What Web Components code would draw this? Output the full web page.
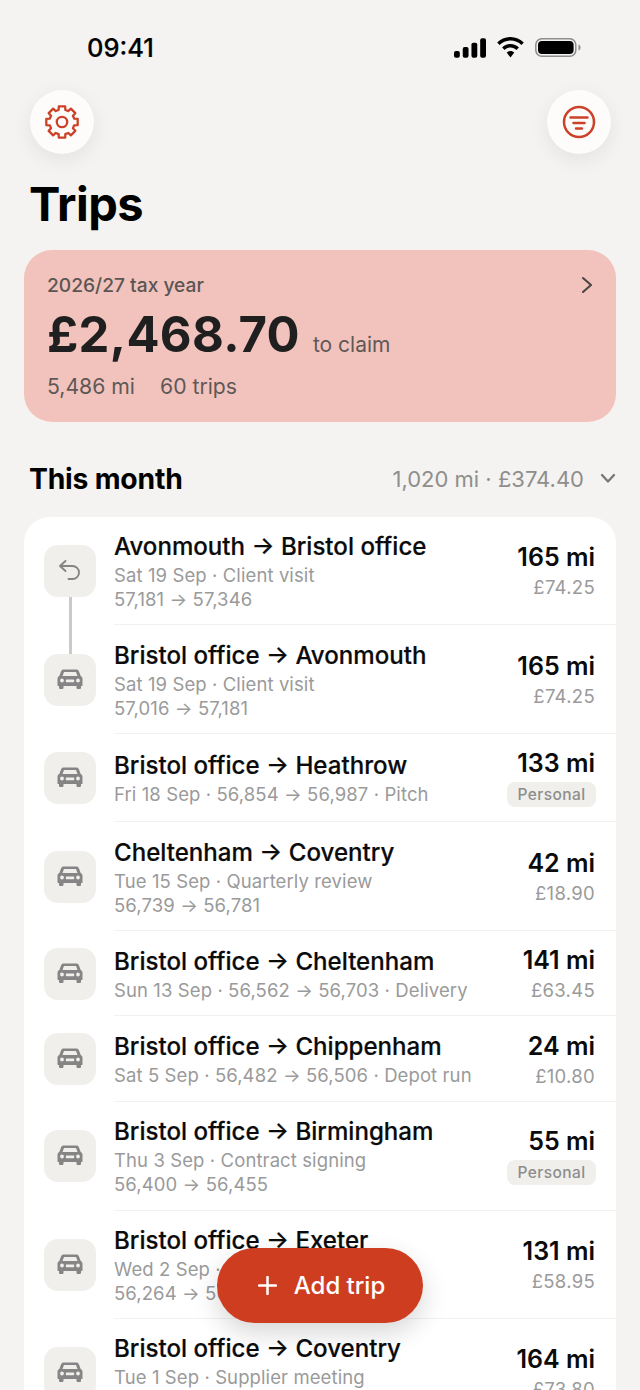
<!DOCTYPE html>
<html lang="en">
<head>
<meta charset="utf-8">
<title>Trips</title>
<style>
    html, body { margin: 0; padding: 0; background: #f4f3f1; }
    body { width: 640px; height: 1390px; overflow: hidden; position: relative; font-family: Inter, "Liberation Sans", sans-serif; }
    main { display: block; }
</style>
</head>
<body>
<main>
    <status-bar></status-bar>
    <top-actions></top-actions>
    <page-title>Trips</page-title>
    <summary-card year="2026/27 tax year" amount="£2,468.70" miles="5,486 mi" trips="60 trips"></summary-card>
    <section-head label="This month" total="1,020 mi · £374.40"></section-head>
    <trip-list>
        <trip-row icon="back" linked route="Avonmouth → Bristol office" line1="Sat 19 Sep · Client visit" line2="57,181 → 57,346" miles="165 mi" amount="£74.25"></trip-row>
        <trip-row route="Bristol office → Avonmouth" line1="Sat 19 Sep · Client visit" line2="57,016 → 57,181" miles="165 mi" amount="£74.25"></trip-row>
        <trip-row route="Bristol office → Heathrow" line1="Fri 18 Sep · 56,854 → 56,987 · Pitch" miles="133 mi" personal></trip-row>
        <trip-row route="Cheltenham → Coventry" line1="Tue 15 Sep · Quarterly review" line2="56,739 → 56,781" miles="42 mi" amount="£18.90"></trip-row>
        <trip-row route="Bristol office → Cheltenham" line1="Sun 13 Sep · 56,562 → 56,703 · Delivery" miles="141 mi" amount="£63.45"></trip-row>
        <trip-row route="Bristol office → Chippenham" line1="Sat 5 Sep · 56,482 → 56,506 · Depot run" miles="24 mi" amount="£10.80"></trip-row>
        <trip-row route="Bristol office → Birmingham" line1="Thu 3 Sep · Contract signing" line2="56,400 → 56,455" miles="55 mi" personal></trip-row>
        <trip-row route="Bristol office → Exeter" line1="Wed 2 Sep · Site survey" line2="56,264 → 56,395" miles="131 mi" amount="£58.95"></trip-row>
        <trip-row route="Bristol office → Coventry" line1="Tue 1 Sep · Supplier meeting" line2="56,100 → 56,264" miles="164 mi" amount="£73.80"></trip-row>
    </trip-list>
</main>
<add-button>Add trip</add-button>

<script>
const CAR = `<path fill="currentColor" fill-rule="evenodd" d="M6.6 2.5h12.8c1.1 0 2 .6 2.4 1.6l1.9 4.9c1.1.5 1.8 1.5 1.8 2.8v6.4c0 .5-.4.9-.9.9H24v1.6c0 .7-.6 1.3-1.3 1.3h-1.9c-.7 0-1.3-.6-1.3-1.3v-1.6H6.5v1.6c0 .7-.6 1.3-1.3 1.3H3.3c-.7 0-1.3-.6-1.3-1.3v-1.6h-.6c-.5 0-.9-.4-.9-.9v-6.4c0-1.3.7-2.3 1.8-2.8l1.9-4.9c.4-1 1.3-1.6 2.4-1.6ZM7 5l-1.5 3.9h15L19 5H7Zm-2 6.6a1.9 1.9 0 1 0 0 3.8 1.9 1.9 0 0 0 0-3.8Zm16 0a1.9 1.9 0 1 0 0 3.8 1.9 1.9 0 0 0 0-3.8Zm-11.5.9c-.4 0-.7.3-.7.7v1.3c0 .4.3.7.7.7h7c.4 0 .7-.3.7-.7v-1.3c0-.4-.3-.7-.7-.7h-7Z"/>`;
const BACK = `<path fill="none" stroke="currentColor" stroke-width="1.900" stroke-linecap="round" stroke-linejoin="round" d="M8.500 13 3 8l5.500-5M3.200 8h12.300a6.500 6.500 0 0 1 0 13h-4"/>`;

class StatusBar extends HTMLElement {
    constructor() {
        super();
        this.attachShadow({ mode: 'open' });
        this.shadowRoot.innerHTML = `
            <style>
                :host { display: flex; justify-content: space-between; align-items: center; height: 32px; padding: 31px 59px 0 87px; color: #000; font-family: Inter, "Liberation Sans", sans-serif; }
                .time { font-size: 25.500px; font-weight: 500; -webkit-text-stroke: 0.2px #000; }
                .icons { display: flex; align-items: center; gap: 11px; }
                svg { display: block; }
            </style>
            <span class="time">09:41</span>
            <div class="icons">
                <svg width="32" height="21" viewBox="0 0 33 21"><rect x="0" y="14" width="6" height="7" rx="2"/><rect x="9" y="10" width="6" height="11" rx="2"/><rect x="18" y="5.500" width="6" height="15.500" rx="2"/><rect x="27" y="1" width="6" height="20" rx="2"/></svg>
                <svg width="27" height="21" viewBox="0 0 27 21"><path d="M13.500 0C8.300 0 3.600 2.100.2 5.500l2.400 2.500c2.800-2.800 6.600-4.500 10.900-4.500s8.100 1.700 10.900 4.500l2.400-2.500C23.400 2.100 18.700 0 13.500 0Z"/><path d="M13.500 7c-3.300 0-6.300 1.300-8.400 3.500l2.500 2.500c1.500-1.500 3.600-2.500 5.900-2.500s4.400 1 5.900 2.500l2.500-2.500C19.800 8.300 16.800 7 13.500 7Z"/><path d="M13.500 14c-1.500 0-2.800.6-3.800 1.600l3.800 5 3.800-5c-1-1-2.300-1.600-3.800-1.600Z"/></svg>
                <svg width="46" height="21" viewBox="0 0 46 21"><rect x=".8" y="1.800" width="40" height="17.400" rx="6" fill="none" stroke="#8d8d8d" stroke-width="1.500"/><rect x="3" y="4" width="35.600" height="13" rx="4"/><path d="M43.500 7.500c1.300.4 2 1.500 2 3s-.7 2.600-2 3Z" fill="#8d8d8d"/></svg>
            </div>
        `;
    }
}

class RoundButton extends HTMLElement {
    constructor() {
        super();
        this.attachShadow({ mode: 'open' });
        this.shadowRoot.innerHTML = `
            <style>
                :host { display: flex; width: 64px; height: 64px; border-radius: 50%; background: #fdfcfa; color: #cb4228; align-items: center; justify-content: center; box-shadow: 0 6px 20px rgba(0, 0, 0, 0.07); }
            </style>
            <slot></slot>
        `;
    }
}

class TopActions extends HTMLElement {
    constructor() {
        super();
        this.attachShadow({ mode: 'open' });
        // 8 tooth cog, outline only
        const pts = [];
        for (let i = 0; i < 8; i++) {
            const a = (i * Math.PI) / 4;
            [[-0.27, 12.6], [-0.2, 16], [0.2, 16], [0.27, 12.6]].forEach(([d, r]) => {
                pts.push((17 + r * Math.sin(a + d)).toFixed(2) + ',' + (17 - r * Math.cos(a + d)).toFixed(2));
            });
        }
        this.shadowRoot.innerHTML = `
            <style>
                :host { display: flex; justify-content: space-between; padding: 27px 29px 0 30px; }
                svg { display: block; }
            </style>
            <round-button>
                <svg width="34" height="34" viewBox="0 0 34 34" fill="none" stroke="currentColor" stroke-width="2.300" stroke-linejoin="round"><polygon points="${pts.join(' ')}"/><circle cx="17" cy="17" r="5.200"/></svg>
            </round-button>
            <round-button>
                <svg width="34" height="34" viewBox="0 0 34 34" fill="none" stroke="currentColor" stroke-width="2.500" stroke-linecap="round"><circle cx="17" cy="17" r="15"/><path d="M8.500 12.500h17M11.500 18h11M14 23.500h6"/></svg>
            </round-button>
        `;
    }
}

class PageTitle extends HTMLElement {
    constructor() {
        super();
        this.attachShadow({ mode: 'open' });
        this.shadowRoot.innerHTML = `
            <style>
                :host { display: block; padding: 23px 29px 0; height: 73px; font-size: 47px; line-height: 54px; font-weight: 700; letter-spacing: -0.6px; color: #000; }
            </style>
            <slot></slot>
        `;
    }
}

class SummaryCard extends HTMLElement {
    constructor() {
        super();
        this.attachShadow({ mode: 'open' });
        this.shadowRoot.innerHTML = `
            <style>
                :host { display: block; margin: 0 24px; height: 172px; box-sizing: border-box; padding: 22px 24px 0 23px; border-radius: 28px; background: #f2c3bd; color: #1f1f1f; }
                .top { display: flex; justify-content: space-between; align-items: center; font-size: 19.200px; line-height: 26px; font-weight: 500; color: #5b5553; }
                .top svg { margin-right: -1px; }
                .main { display: flex; align-items: baseline; gap: 13px; margin-top: 7px; height: 60px; line-height: 60px; }
                .amount { font-size: 49px; font-weight: 700; letter-spacing: 0.3px; }
                .claim { font-size: 21px; color: #5f5856; }
                .meta { display: flex; gap: 25px; margin-top: 7px; font-size: 21.200px; line-height: 28px; color: #5f5856; }
            </style>
            <div class="top">
                <span>${this.getAttribute('year')}</span>
                <svg width="12" height="18" viewBox="0 0 12 18" fill="none" stroke="#4a4543" stroke-width="2.100" stroke-linecap="round" stroke-linejoin="round"><path d="M2 2l8 7-8 7"/></svg>
            </div>
            <div class="main"><span class="amount">${this.getAttribute('amount')}</span><span class="claim">to claim</span></div>
            <div class="meta"><span>${this.getAttribute('miles')}</span><span>${this.getAttribute('trips')}</span></div>
        `;
    }
}

class SectionHead extends HTMLElement {
    constructor() {
        super();
        this.attachShadow({ mode: 'open' });
        this.shadowRoot.innerHTML = `
            <style>
                :host { display: flex; align-items: center; justify-content: space-between; height: 95px; padding: 18px 24px 0 29px; box-sizing: border-box; }
                .label { font-size: 28.300px; font-weight: 700; letter-spacing: -0.2px; color: #000; }
                .right { display: flex; align-items: center; gap: 16px; font-size: 22px; color: #8f8e8c; }
            </style>
            <span class="label">${this.getAttribute('label')}</span>
            <span class="right">
                <span>${this.getAttribute('total')}</span>
                <svg width="16" height="11" viewBox="0 0 16 11" fill="none" stroke="#77767a" stroke-width="2.300" stroke-linecap="round" stroke-linejoin="round"><path d="M2 2l6 6.500L14 2"/></svg>
            </span>
        `;
    }
}

class TripList extends HTMLElement {
    constructor() {
        super();
        this.attachShadow({ mode: 'open' });
        this.shadowRoot.innerHTML = `
            <style>
                :host { display: block; margin: 0 24px; border-radius: 26px 26px 0 0; background: #fff; }
            </style>
            <slot></slot>
        `;
    }
}

class TripRow extends HTMLElement {
    constructor() {
        super();
        this.attachShadow({ mode: 'open' });
        const get = (n) => this.getAttribute(n);
        const line2 = get('line2') ? `<div class="sub">${get('line2')}</div>` : '';
        const foot = this.hasAttribute('personal')
            ? `<span class="tag">Personal</span>`
            : `<div class="amt">${get('amount')}</div>`;
        this.shadowRoot.innerHTML = `
            <style>
                :host { display: flex; position: relative; align-items: center; padding-left: 20px; }
                .tile { flex: none; position: relative; width: 52px; height: 52px; border-radius: 14px; background: #f0efeb; color: #868585; display: flex; align-items: center; justify-content: center; margin-right: 18px; }
                .link { position: absolute; left: 24.500px; top: 52px; width: 3px; height: 56.400px; background: #cbcaca; }
                .body { flex: 1; min-width: 0; display: flex; align-items: center; justify-content: space-between; padding: 14.200px 21px 13.200px 0; border-bottom: 1px solid #f3f2f0; }
                :host(:last-child) .body { border-bottom: 0; }
                .route { font-size: 24.100px; line-height: 30px; margin: 1px 0; font-weight: 500; color: #0b0b0b; white-space: nowrap; -webkit-text-stroke: 0.2px #0b0b0b; }
                .sub { font-size: 18.500px; line-height: 24px; color: #9a9a9a; white-space: nowrap; letter-spacing: 0.1px; }
                .right { flex: none; display: flex; flex-direction: column; align-items: flex-end; gap: 3px; }
                .mi { font-size: 25px; line-height: 30px; font-weight: 600; color: #0b0b0b; white-space: nowrap; }
                .amt { font-size: 18.500px; line-height: 24.400px; color: #9a9a9a; letter-spacing: 0.3px; }
                .tag { font-size: 15.500px; font-weight: 500; line-height: 25px; padding: 0 10.500px; margin: 1px -1px 1.200px 0; border-radius: 8px; background: #f0efeb; color: #8d8d8d; letter-spacing: 0.4px; }
                svg { display: block; }
            </style>
            <div class="tile">
                <svg width="26" height="26" viewBox="0 0 26 26">${get('icon') === 'back' ? BACK : CAR}</svg>
                ${this.hasAttribute('linked') ? '<div class="link"></div>' : ''}
            </div>
            <div class="body">
                <div>
                    <div class="route">${get('route')}</div>
                    <div class="sub">${get('line1')}</div>
                    ${line2}
                </div>
                <div class="right">
                    <div class="mi">${get('miles')}</div>
                    ${foot}
                </div>
            </div>
        `;
    }
}

class AddButton extends HTMLElement {
    constructor() {
        super();
        this.attachShadow({ mode: 'open' });
        this.shadowRoot.innerHTML = `
            <style>
                :host { position: absolute; left: 217px; top: 1248px; width: 206px; height: 75px; box-sizing: border-box; padding-left: 3px; border-radius: 38px; background: #cf3d20; color: #fff; display: flex; align-items: center; justify-content: center; gap: 17px; font-size: 24px; font-weight: 500; box-shadow: 0 10px 26px rgba(0, 0, 0, 0.16); }
                svg { display: block; }
            </style>
            <svg width="19" height="19" viewBox="0 0 19 19" stroke="#fff" stroke-width="2.500" stroke-linecap="round"><path d="M9.500 1v17M1 9.500h17"/></svg>
            <span><slot></slot></span>
        `;
    }
}

customElements.define('status-bar', StatusBar);
customElements.define('round-button', RoundButton);
customElements.define('top-actions', TopActions);
customElements.define('page-title', PageTitle);
customElements.define('summary-card', SummaryCard);
customElements.define('section-head', SectionHead);
customElements.define('trip-list', TripList);
customElements.define('trip-row', TripRow);
customElements.define('add-button', AddButton);
</script>
</body>
</html>
